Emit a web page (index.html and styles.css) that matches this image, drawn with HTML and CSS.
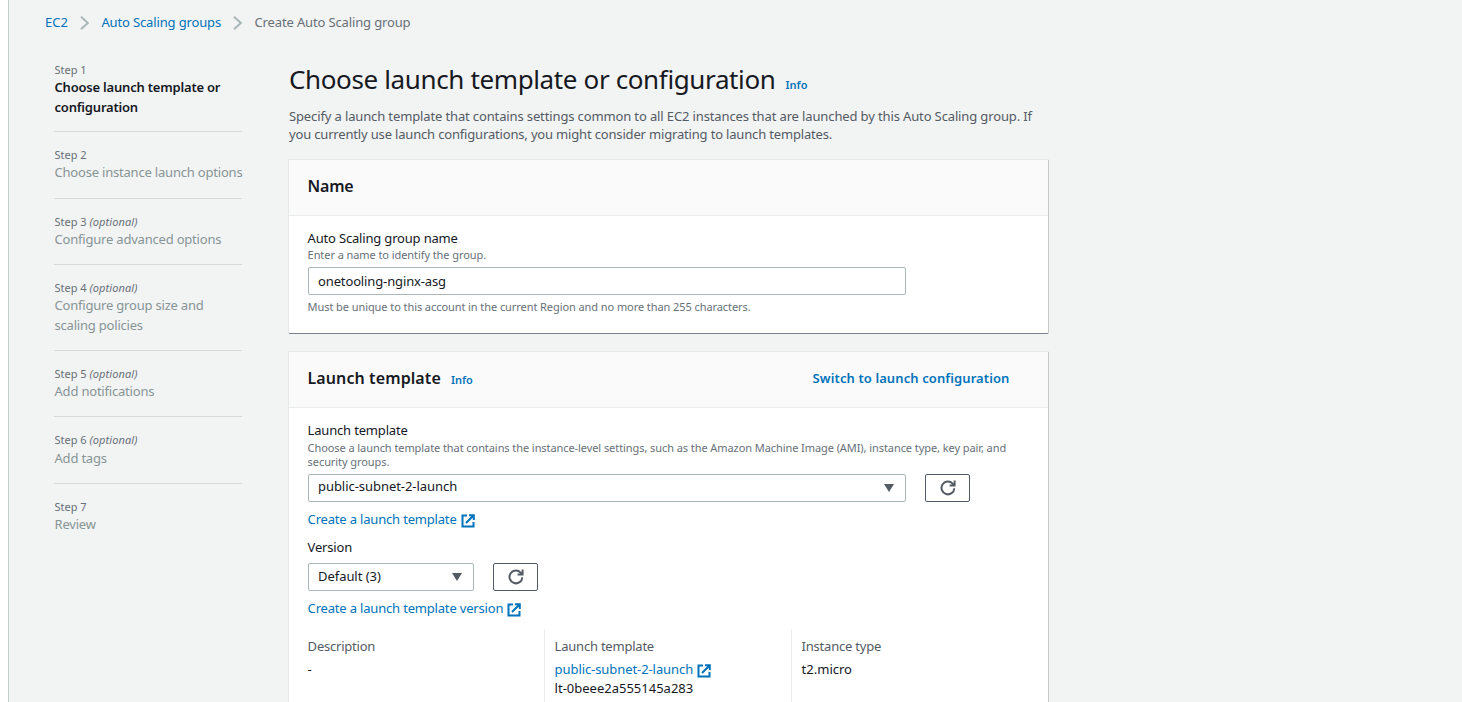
FILE: index.html
```html
<!DOCTYPE html>
<html lang="en">
<head>
<meta charset="utf-8">
<title>Create Auto Scaling group</title>
<link rel="stylesheet" href="styles.css">
</head>
<body>
<svg class="defs" width="0" height="0">
  <symbol id="external" viewBox="0 0 14 14"><path d="M6 1.5H1.5v11h11V8M8 1.2h4.8V6M12.5 1.5L5 9" fill="none" stroke="currentColor" stroke-width="2"/></symbol>
  <symbol id="refresh" viewBox="0 0 16 16"><path d="M14.3 8.2A6.4 6.4 0 1 1 12.6 3.6L14 5M14.6 .6v5H9.6" fill="none" stroke="currentColor" stroke-width="2"/></symbol>
  <symbol id="chevron" viewBox="0 0 10 14"><path d="M1 .8L7.8 7 1 13.2" fill="none" stroke="currentColor" stroke-width="2"/></symbol>
</svg>
<div class="app">
  <nav class="breadcrumbs">
    <a>EC2</a>
    <svg class="chevron"><use href="#chevron"/></svg>
    <a class="crumb">Auto Scaling groups</a>
    <svg class="chevron"><use href="#chevron"/></svg>
    <span class="crumb current">Create Auto Scaling group</span>
  </nav>
  <div class="layout">
    <ol class="steps">
      <li class="step active"><span class="step-label">Step 1</span><span class="step-title">Choose launch template or<br>configuration</span></li>
      <li class="step"><span class="step-label">Step 2</span><span class="step-title">Choose instance launch options</span></li>
      <li class="step"><span class="step-label">Step 3 <i>(optional)</i></span><span class="step-title">Configure advanced options</span></li>
      <li class="step"><span class="step-label">Step 4 <i>(optional)</i></span><span class="step-title">Configure group size and<br>scaling policies</span></li>
      <li class="step"><span class="step-label">Step 5 <i>(optional)</i></span><span class="step-title">Add notifications</span></li>
      <li class="step"><span class="step-label">Step 6 <i>(optional)</i></span><span class="step-title">Add tags</span></li>
      <li class="step"><span class="step-label">Step 7</span><span class="step-title">Review</span></li>
    </ol>
    <main class="content">
      <header class="page-header"><h1>Choose launch template or configuration</h1><a class="info">Info</a></header>
      <p class="intro">Specify a launch template that contains settings common to all EC2 instances that are launched by this Auto Scaling group. If<br><span class="tight">you currently use launch configurations, you might consider migrating to launch templates.</span></p>
      <section class="card">
        <div class="card-head"><h2 class="name">Name</h2></div>
        <div class="card-body">
          <label class="label">Auto Scaling group name</label>
          <p class="hint">Enter a name to identify the group.</p>
          <div class="field wide input">onetooling-nginx-asg</div>
          <p class="hint constraint">Must be unique to this account in the current Region and no more than 255 characters.</p>
        </div>
      </section>
      <section class="card">
        <div class="card-head"><h2>Launch template</h2><a class="info">Info</a><a class="switch">Switch to launch configuration</a></div>
        <div class="card-body">
          <label class="label">Launch template</label>
          <p class="hint two-lines">Choose a launch template that contains the instance-level settings, such as the Amazon Machine Image (AMI), instance type, key pair, and<br>security groups.</p>
          <div class="row">
            <div class="field wide select"><span>public-subnet-2-launch</span><i class="caret"></i></div>
            <button class="refresh"><svg><use href="#refresh"/></svg></button>
          </div>
          <a class="link create">Create a launch template<svg class="ext"><use href="#external"/></svg></a>
          <label class="label version">Version</label>
          <div class="row">
            <div class="field narrow select"><span>Default (3)</span><i class="caret"></i></div>
            <button class="refresh"><svg><use href="#refresh"/></svg></button>
          </div>
          <a class="link create">Create a launch template version<svg class="ext"><use href="#external"/></svg></a>
          <div class="details">
            <div class="detail"><span class="key">Description</span><span class="value">-</span></div>
            <div class="detail"><span class="key">Launch template</span><a class="link template">public-subnet-2-launch<svg class="ext"><use href="#external"/></svg></a><span class="value">lt-0beee2a555145a283</span></div>
            <div class="detail"><span class="key">Instance type</span><span class="value">t2.micro</span></div>
          </div>
        </div>
      </section>
    </main>
  </div>
</div>
</body>
</html>
```
FILE: styles.css
```css
* { box-sizing: border-box; }
body { margin: 0; height: 702px; overflow: hidden; background: #fff; color: #16191f; font: 13px/19px "Noto Sans", sans-serif; }
.defs { position: absolute; }
h1, h2, p, ol { margin: 0; padding: 0; font-weight: 400; }
a { color: #0073bb; }
.app { margin-left: 8px; height: 702px; overflow: hidden; border-left: 1px solid #c5cccc; background: #f2f3f3; padding: 12px 0 0 36px; }
.breadcrumbs { display: flex; align-items: center; height: 20px; }
.chevron { width: 10px; height: 14px; margin: 2px 11.5px 0 12px; color: #aab7b8; }
.crumb { letter-spacing: -0.14px; }
.current { color: #687078; }
.layout { display: flex; margin-top: 30px; }
.steps { list-style: none; width: 188px; margin-left: 9px; flex: none; }
.step { padding: 14.9px 0 15px 0.5px; border-bottom: 1px solid #d5dbdb; }
.step:first-child { padding-top: 0; padding-bottom: 14.4px; }
.step:last-child { border: 0; }
.step-label { display: block; font-size: 11px; line-height: 16px; margin-bottom: 0.4px; color: #687078; }
.step-label i { letter-spacing: 0.1px; }
.step-title { display: block; line-height: 19.2px; color: #879596; white-space: nowrap; letter-spacing: -0.2px; }
.active .step-title { color: #16191f; font-weight: 600; }
.content { width: 760px; margin-left: 46px; flex: none; }
.page-header { display: flex; align-items: baseline; height: 38px; padding-left: 1px; }
h1 { font-size: 26px; line-height: 34px; white-space: nowrap; letter-spacing: -0.37px; }
.info { font-size: 11px; font-weight: 600; margin-left: 10px; }
.intro { color: #545b64; line-height: 18px; white-space: nowrap; margin-top: 7px; padding-left: 1px; letter-spacing: -0.13px; }
.tight { letter-spacing: -0.17px; }
.card { width: 761px; margin-top: 16px; background: #fff; border: 1px solid #e6e9e9; border-right-color: #c3c9c9; border-bottom-color: #79838b; border-radius: 2px; }
.card + .card { margin-top: 17px; height: 400px; }
.card-head { display: flex; align-items: baseline; height: 56px; padding: 15px 38.5px 0 18.5px; background: #fafafa; border-bottom: 1px solid #eaeded; }
h2 { font-size: 16px; line-height: 22px; font-weight: 600; letter-spacing: 0.1px; }
.name { letter-spacing: -0.2px; }
.switch { margin-left: auto; font-weight: 600; letter-spacing: 0.1px; position: relative; top: -1px; }
.card-body { padding: 12px 0 19px 19px; }
.label { display: block; line-height: 20px; letter-spacing: -0.18px; margin-left: -0.4px; }
.hint { font-size: 11px; line-height: 14px; color: #687078; white-space: nowrap; letter-spacing: -0.075px; margin-left: -0.4px; }
.two-lines { padding-top: 1px; }
.field { height: 28px; border: 1px solid #aab7b8; border-radius: 2px; background: #fff; padding: 0 11px 0 9px; display: flex; align-items: center; justify-content: space-between; margin-top: 5px; letter-spacing: -0.05px; }
.input { letter-spacing: -0.13px; }
.select span { padding-bottom: 2px; }
.wide { width: 598px; }
.wide.select span { padding-bottom: 3px; }
.narrow { width: 166px; }
.constraint { margin-top: 5px; }
.row { display: flex; gap: 19px; }
.caret { border: 5.5px solid transparent; border-top: 8px solid #545b64; border-bottom: 0; }
.refresh { width: 45px; height: 28px; margin-top: 5px; padding: 0 0 1px; background: #fff; border: 1px solid #545b64; border-radius: 2px; color: #545b64; display: flex; align-items: center; justify-content: center; }
.refresh svg { width: 16px; height: 16px; }
.link { display: flex; align-items: center; gap: 4px; letter-spacing: -0.18px; margin-left: -0.4px; }
.template { letter-spacing: -0.08px; }
.ext { width: 14px; height: 14px; margin-top: 2px; }
.create { margin-top: 8px; }
.version { margin-top: 8px; margin-bottom: 1px; }
.details { display: flex; margin-top: 11px; height: 100px; }
.detail { width: 247px; padding: 8px 0 0 10px; border-left: 1px solid #eaeded; }
.detail:first-child { width: 236px; padding-left: 0; border: 0; }
.key { display: block; color: #545b64; margin-bottom: 4px; letter-spacing: -0.22px; margin-left: -0.4px; }
.value { display: block; margin-left: -0.4px; }
```
